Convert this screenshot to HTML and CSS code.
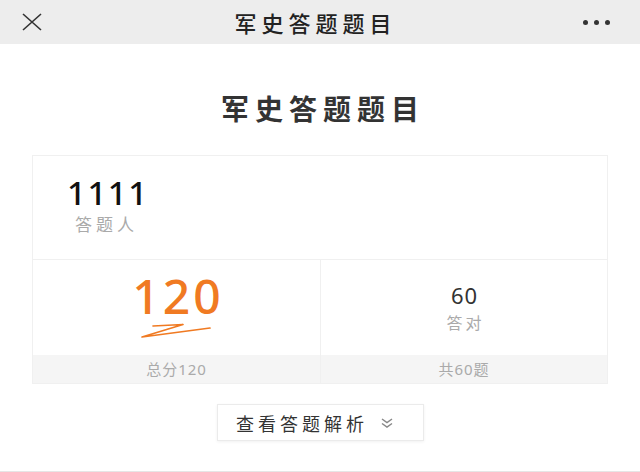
FILE: index.html
```html
<!DOCTYPE html>
<html lang="zh-CN">
<head>
  <meta charset="UTF-8" />
  <meta name="viewport" content="width=device-width, initial-scale=1.0">
  <title>军史答题题目</title>
  <link rel="stylesheet" href="styles.css">
</head>
<body>
  <header class="topbar">
    <svg class="close-icon" width="22" height="18" viewBox="0 0 22 18">
      <path d="M2 1 L20 17 M20 1 L2 17" stroke="#333" stroke-width="1.6" fill="none" />
    </svg>
    <div class="topbar-title">军史答题题目</div>
    <div class="more">
      <span></span><span></span><span></span>
    </div>
  </header>

  <main class="page">
    <h1 class="title">军史答题题目</h1>

    <section class="card">
      <div class="people">
        <div class="people-num">1111</div>
        <div class="people-label">答题人</div>
      </div>

      <div class="stats">
        <div class="stat">
          <div class="stat-main">
            <div class="score">120</div>
            <svg class="swoosh" width="80" height="18" viewBox="0 0 80 18">
              <path d="M14 4 L44 2.5 L3 15 L71 6" stroke="#f07a22" stroke-width="1.7" fill="none" stroke-linejoin="round" stroke-linecap="round" />
            </svg>
          </div>
          <div class="stat-foot">总分120</div>
        </div>
        <div class="stat">
          <div class="stat-main">
            <div class="correct">60</div>
            <div class="correct-label">答对</div>
          </div>
          <div class="stat-foot">共60题</div>
        </div>
      </div>
    </section>

    <button class="analysis-btn">
      <span>查看答题解析</span>
      <svg width="14" height="10" viewBox="0 0 14 10">
        <path d="M2 1 L7 4.5 L12 1 M2 5.5 L7 9 L12 5.5" stroke="#888" stroke-width="1.5" fill="none" />
      </svg>
    </button>
  </main>
</body>
</html>
```

FILE: styles.css
```css
body {
  margin: 0;
  font-family: "Noto Sans", "Noto Sans CJK SC", sans-serif;
  background: #fff;
  color: #333;
  height: 472px;
  overflow: hidden;
  border-bottom: 1px solid #e6e6e6;
  box-sizing: border-box;
}
.topbar {
  height: 44px;
  background: #ededed;
  display: flex;
  align-items: center;
  justify-content: space-between;
  padding: 0 30px 0 21px;
}
.close-icon {
  display: block;
}
.topbar-title {
  font-size: 22px;
  letter-spacing: 5px;
  padding-left: 5px;
  color: #222;
  font-weight: 500;
}
.more {
  display: flex;
  gap: 6px;
}
.more span {
  width: 5px;
  height: 5px;
  border-radius: 50%;
  background: #333;
}
.page {
  display: flex;
  flex-direction: column;
  align-items: center;
}
.title {
  margin: 46px 0 0;
  font-size: 28px;
  line-height: 38px;
  font-weight: 700;
  letter-spacing: 6px;
  padding-left: 6px;
  color: #333;
}
.card {
  margin-top: 27px;
  width: 576px;
  border: 1px solid #f0f0f0;
  box-sizing: border-box;
}
.people {
  height: 103px;
  padding: 18px 0 0 34px;
  box-sizing: border-box;
}
.people-num {
  font-size: 33px;
  line-height: 38px;
  letter-spacing: 1.5px;
  font-weight: 500;
  color: #111;
}
.people-label {
  margin-top: 2px;
  font-size: 17px;
  line-height: 22px;
  letter-spacing: 4px;
  color: #aaa;
  padding-left: 8px;
}
.stats {
  display: grid;
  grid-template-columns: 287px 1fr;
  border-top: 1px solid #f0f0f0;
}
.stat + .stat {
  border-left: 1px solid #f0f0f0;
}
.stat-main {
  height: 95px;
  display: flex;
  flex-direction: column;
  align-items: center;
  box-sizing: border-box;
}
.score {
  margin-top: 10px;
  font-size: 48px;
  line-height: 52px;
  letter-spacing: 3px;
  padding-left: 3px;
  font-weight: 500;
  color: #f07a22;
}
.swoosh {
  display: block;
  margin: 0 0 0 4px;
}
.correct {
  margin-top: 22px;
  font-size: 22px;
  line-height: 26px;
  letter-spacing: 1px;
  padding-left: 1px;
  color: #333;
}
.correct-label {
  margin-top: 5px;
  font-size: 16px;
  line-height: 20px;
  letter-spacing: 3px;
  padding-left: 3px;
  color: #aaa;
}
.stat-foot {
  height: 28px;
  background: #f5f5f5;
  text-align: center;
  font-size: 15px;
  line-height: 28px;
  letter-spacing: 1px;
  color: #aaa;
}
.analysis-btn {
  margin-top: 20px;
  width: 207px;
  height: 37px;
  border: 1px solid #ebebeb;
  background: #fff;
  box-shadow: 0 1px 3px rgba(0, 0, 0, 0.06);
  display: flex;
  align-items: center;
  justify-content: center;
  gap: 12px;
  padding: 0 10px 0 0;
  font-family: inherit;
  font-size: 18px;
  letter-spacing: 4px;
  color: #333;
}
.analysis-btn svg {
  display: block;
}
```
